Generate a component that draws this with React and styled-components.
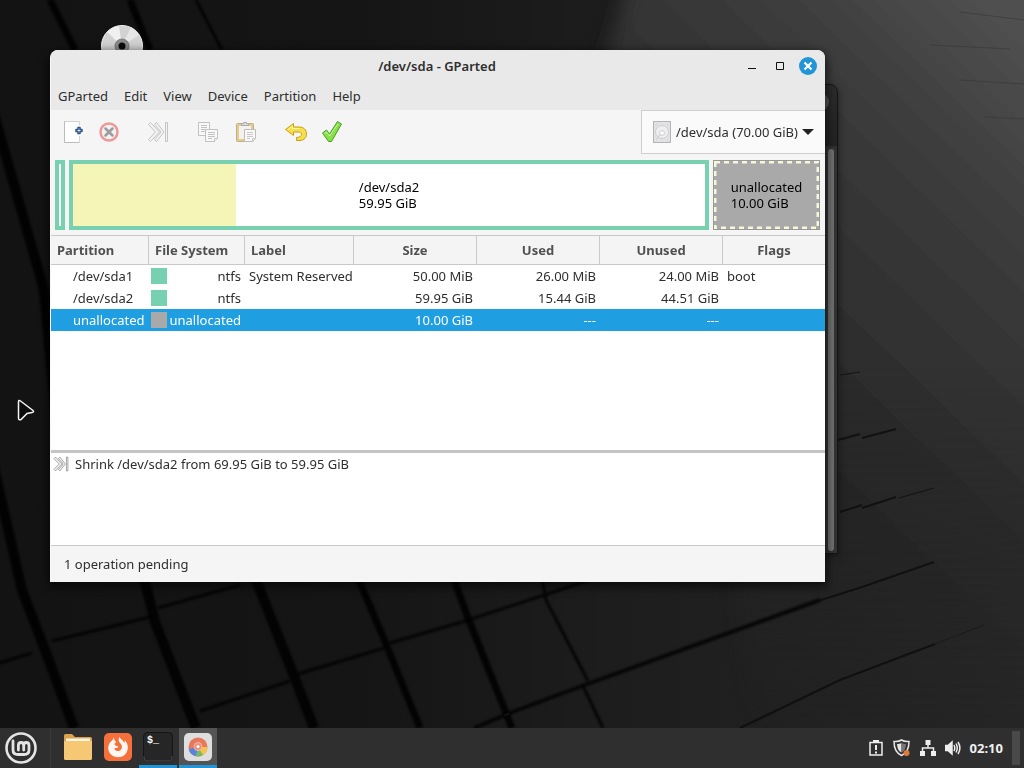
import React from 'react';
import styled, { createGlobalStyle } from 'styled-components';

const GlobalStyle = createGlobalStyle`
  * {
    box-sizing: border-box;
  }

  body {
    margin: 0;
    font-family: "Noto Sans", "Open Sans", sans-serif;
    font-size: 13px;
    line-height: 16px;
    color: #2e2e2e;
  }

  button, select {
    font: inherit;
    color: inherit;
    border: none;
    background: none;
    padding: 0;
  }

  svg {
    display: block;
    flex: none;
  }
`;

const Screen = styled.div`
  display: flex;
  flex-direction: column;
  height: 100vh;
  background: #151515;
`;

const Desktop = styled.main`
  position: relative;
  flex: 1;
  overflow: hidden;
`;

const WallpaperSvg = styled.svg`
  position: absolute;
  inset: 0;
  width: 100%;
  height: 100%;
`;

const DiscIcon = styled.svg`
  position: absolute;
  top: 25px;
  left: 101px;
`;

const Cursor = styled.svg`
  position: absolute;
  top: 398px;
  left: 16px;
`;

/* the terminal that sits behind the main window */
const BackWindow = styled.div`
  position: absolute;
  top: 84px;
  right: 186px;
  bottom: 174px;
  width: 200px;
  display: flex;
  flex-direction: column;
  align-items: flex-end;
  padding: 64px 3px 2px 0;
  border: 1px solid #151515;
  border-radius: 8px 8px 0 0;
  background: linear-gradient(#2b2b2b, #222 60px, #333 62px);
  box-shadow: 0 2px 8px rgba(0, 0, 0, 0.5);
`;

const BackScrollbar = styled.div`
  flex: 1;
  width: 6px;
  border-radius: 3px;
  background: #707070;
`;

const BackClose = styled.div`
  position: absolute;
  top: 8px;
  right: 8px;
  width: 18px;
  height: 18px;
  border-radius: 50%;
  background: #555;
`;

const Window = styled.section`
  position: absolute;
  top: 50px;
  left: 50px;
  right: 199px;
  bottom: 146px;
  display: flex;
  flex-direction: column;
  overflow: hidden;
  border-left: 1px solid #f8f8f8;
  border-radius: 8px 8px 0 0;
  background: #f5f5f5;
  box-shadow: 0 3px 10px 2px rgba(0, 0, 0, 0.6);
`;

const TitleBar = styled.header`
  display: flex;
  align-items: center;
  height: 32px;
  padding: 0 8px 0 80px;
  background: #e9e9e9;
`;

const Title = styled.h1`
  flex: 1;
  margin: 0;
  font-size: 13px;
  font-weight: 600;
  text-align: center;
`;

const WindowButtons = styled.div`
  display: flex;
  gap: 10px;
`;

const WindowButton = styled.button`
  display: flex;
  align-items: center;
  justify-content: center;
  width: 18px;
  height: 18px;
  border-radius: 50%;
  background: ${({ $accent }) => ($accent ? '#2295d8' : 'transparent')};
`;

const MenuBar = styled.nav`
  display: flex;
  align-items: center;
  gap: 16px;
  height: 28px;
  padding: 0 7px;
  background: #e9e9e9;
`;

const Toolbar = styled.div`
  display: flex;
  align-items: center;
  height: 44px;
  padding-left: 10px;
`;

const ToolGroup = styled.div`
  display: flex;
  gap: ${({ $gap }) => $gap || 12}px;
  margin-right: ${({ $after }) => $after || 0}px;
`;

const ToolButton = styled.button`
  display: flex;
  align-items: center;
  justify-content: center;
  width: 24px;
  height: 24px;
`;

const DevicePicker = styled.label`
  display: flex;
  align-items: center;
  gap: 4px;
  height: 44px;
  margin-left: auto;
  padding: 0 11px 0 10px;
  border: 1px solid #cfcfcf;
  border-right: none;
  background: #fafafa;
`;

const DeviceSelect = styled.select`
  appearance: none;
  outline: none;
`;

const DiskMap = styled.div`
  display: grid;
  grid-template-columns: 10fr 640fr 107fr;
  gap: 4px;
  height: 81px;
  padding: 6px 5px 5px 4px;
`;

const Partition = styled.div`
  position: relative;
  display: flex;
  align-items: center;
  justify-content: center;
  min-width: 0;
  border: ${({ $empty }) => ($empty ? '1px solid #999' : '4px solid #77d0b0')};
  background: ${({ $empty }) => ($empty ? '#a9a9a9' : '#fff')};
  color: #000;
`;

const DashedEdge = styled.svg`
  position: absolute;
  inset: 0;
  width: 100%;
  height: 100%;
`;

const UsedSpace = styled.div`
  position: absolute;
  top: 0;
  bottom: 0;
  left: 0;
  background: #f6f5b8;
`;

const PartitionText = styled.div`
  position: relative;
  white-space: pre-line;
`;

const ListPane = styled.div`
  flex: 1;
  overflow: hidden;
  background: #fff;
`;

const Table = styled.table`
  width: 100%;
  table-layout: fixed;
  border-collapse: separate;
  border-spacing: 0;
`;

const HeadCell = styled.th`
  height: 30px;
  padding: 0 6px;
  border: solid #c9c9c9;
  border-width: 1px 1px 1px 0;
  background: #f4f4f4;
  color: #505050;
  font-weight: 700;
  text-align: ${({ $align }) => $align || 'center'};
  white-space: nowrap;

  &:last-child {
    border-right: none;
  }
`;

const Row = styled.tr`
  background: ${({ $selected }) => ($selected ? '#1f9ee2' : 'transparent')};
  color: ${({ $selected }) => ($selected ? '#fff' : 'inherit')};
`;

const Cell = styled.td`
  height: 22px;
  padding: 0 4px 0 ${({ $indent }) => $indent || 4}px;
  text-align: ${({ $align }) => $align || 'left'};
  white-space: nowrap;
`;

const FileSystem = styled.div`
  display: flex;
  align-items: center;
  justify-content: space-between;
`;

const Swatch = styled.span`
  width: 16px;
  height: 16px;
  background: ${({ $color }) => $color};
`;

const OperationsPane = styled.ul`
  height: 96px;
  margin: 0;
  padding: 1px 2px;
  border-top: 3px solid #c4c4c4;
  border-bottom: 1px solid #c9c9c9;
  background: #fff;
  list-style: none;
`;

const Operation = styled.li`
  display: flex;
  align-items: center;
  gap: 6px;
  height: 20px;
`;

const StatusBar = styled.footer`
  display: flex;
  align-items: center;
  height: 36px;
  padding: 0 13px;
`;

const Panel = styled.footer`
  display: flex;
  align-items: center;
  height: 40px;
  background: #2f2f2f;
  color: #f0f0f0;
`;

const MenuButton = styled.button`
  display: flex;
  align-items: center;
  height: 40px;
  padding: 0 12px 0 4px;
  border-right: 1px solid #3a3a3a;
`;

const Launchers = styled.div`
  display: flex;
  gap: 2px;
  padding-left: 8px;
`;

const Launcher = styled.button`
  display: flex;
  align-items: center;
  justify-content: center;
  width: 38px;
  height: 40px;
  border-bottom: 3px solid ${({ $running }) => ($running ? '#2295d8' : 'transparent')};
  background: ${({ $active }) => ($active ? '#545454' : 'transparent')};
  background-clip: padding-box;
`;

const Tray = styled.div`
  display: flex;
  align-items: center;
  gap: 9px;
  margin-left: auto;
  padding-right: 9px;
`;

const TrayButton = styled.button`
  display: flex;
`;

const Clock = styled.time`
  font-weight: 700;
`;

const ShowDesktop = styled.button`
  width: 8px;
  height: 34px;
  margin-right: 4px;
  background: #494949;
`;

const menus = ['GParted', 'Edit', 'View', 'Device', 'Partition', 'Help'];

const columns = [
  { label: 'Partition', width: 98, align: 'left' },
  { label: 'File System', width: 96, align: 'left' },
  { label: 'Label', width: 109, align: 'left' },
  { label: 'Size', width: 123 },
  { label: 'Used', width: 123 },
  { label: 'Unused', width: 123 },
  { label: 'Flags' },
];

const rows = [
  { name: '/dev/sda1', fs: 'ntfs', color: '#77d0b0', label: 'System Reserved', size: '50.00 MiB', used: '26.00 MiB', unused: '24.00 MiB', flags: 'boot' },
  { name: '/dev/sda2', fs: 'ntfs', color: '#77d0b0', label: '', size: '59.95 GiB', used: '15.44 GiB', unused: '44.51 GiB', flags: '' },
  { name: 'unallocated', fs: 'unallocated', color: '#a9a9a9', label: '', size: '10.00 GiB', used: '---', unused: '---', flags: '', selected: true },
];

const Wallpaper = () => (
  <WallpaperSvg viewBox="0 0 1024 728" preserveAspectRatio="xMidYMid slice" aria-hidden="true">
    <defs>
      <linearGradient id="base" x1="0" y1="0" x2="1" y2="0">
        <stop offset="0" stopColor="#131313" />
        <stop offset="0.35" stopColor="#151515" />
        <stop offset="0.6" stopColor="#1d1d1d" />
        <stop offset="1" stopColor="#262626" />
      </linearGradient>
      <linearGradient id="slab" x1="0.2" y1="1" x2="0.75" y2="0">
        <stop offset="0" stopColor="#232323" />
        <stop offset="0.45" stopColor="#292929" />
        <stop offset="0.8" stopColor="#3c3c3c" />
        <stop offset="1" stopColor="#505050" />
      </linearGradient>
      <linearGradient id="fade" x1="0" y1="0" x2="0" y2="1">
        <stop offset="0" stopColor="#fff" />
        <stop offset="0.5" stopColor="#fff" />
        <stop offset="1" stopColor="#000" />
      </linearGradient>
      <mask id="slabMask">
        <rect width="1024" height="728" fill="url(#fade)" />
      </mask>
      <filter id="soft">
        <feGaussianBlur stdDeviation="1" />
      </filter>
      <filter id="edge">
        <feGaussianBlur stdDeviation="9" />
      </filter>
    </defs>
    <rect width="1024" height="728" fill="url(#base)" />
    <path d="M635 -40L1060 -40V760H760L700 300L605 60Z" fill="url(#slab)" filter="url(#edge)" mask="url(#slabMask)" />
    <g stroke="#070707" fill="none" filter="url(#soft)">
      <g strokeWidth="10" opacity="0.85">
        <path d="M-10 100L44 290L60 460" />
        <path d="M-10 450L22 590L45 650L74 728" />
        <path d="M142 570L155 622L196 728" />
        <path d="M252 570L294 676L314 728" />
      </g>
      <g strokeWidth="7" opacity="0.85">
        <path d="M50 0L75 50" />
        <path d="M130 0L150 50" />
        <path d="M358 578L386 644L420 728" />
        <path d="M452 574L468 618L512 728" />
      </g>
      <g strokeWidth="3" opacity="0.8">
        <path d="M196 0L222 50" />
        <path d="M542 578L546 600L588 681M583 686L603 728" />
        <path d="M-4 664L32 653" />
        <path d="M52 641L150 617M158 608L240 585" />
        <path d="M200 711L290 681M298 674L384 648" />
        <path d="M390 643L462 622L590 580" />
      </g>
      <path d="M474 728L515 711L590 683L820 600" strokeWidth="4" opacity="0.8" />
    </g>
    <g stroke="#0b0b0b" fill="none" opacity="0.75">
      <path d="M815 602L862 587L934 562" strokeWidth="2" />
      <path d="M740 728L840 680L935 644" strokeWidth="2" />
      <path d="M935 644L984 625" opacity="0.5" />
      <path d="M840 512L862 505M862 508L896 497" strokeWidth="2" />
      <path d="M899 498L934 488" />
      <path d="M838 440L860 434M862 438L896 429" strokeWidth="2" />
      <path d="M840 375L860 372" />
    </g>
    <g stroke="#2e2e2e" fill="none" opacity="0.4">
      <path d="M960 12L1024 20M930 45L1010 49M960 80L1024 84M985 117L1024 119" />
    </g>
  </WallpaperSvg>
);

const ResizeIcon = ({ width = 22, height = 22, color = '#c4c4c4' }) => (
  <svg width={width} height={height} viewBox="0 0 22 22" fill="#f3f3f3" stroke={color} strokeLinejoin="round">
    <path d="M1.500 3.500L3.500 1.500L12.500 11L3.500 20.500L1.500 18.500L8.500 11Z" />
    <path d="M7.500 3.500L9.500 1.500L17 11L9.500 20.500L7.500 18.500L14 11Z" />
    <path d="M18.500 1.500H20.500V20.500H18.500Z" />
  </svg>
);

const NewIcon = () => (
  <svg width="22" height="24" viewBox="0 0 22 24" fill="none">
    <path d="M2.500 1.500H17.500V22.500H2.500Z" fill="#fff" stroke="#d4d4d4" />
    <path d="M2.500 1.500V22.500H17.500" stroke="#a5a5a5" strokeDasharray="1 1" />
    <circle cx="17" cy="10.500" r="5.500" fill="#fafafa" />
    <path d="M16 7.500H18V9.500H20V11.500H18V13.500H16V11.500H14V9.500H16Z" fill="#fff" stroke="#2c5490" strokeWidth="1.500" strokeLinejoin="round" />
  </svg>
);

const DeleteIcon = () => (
  <svg width="22" height="22" viewBox="0 0 22 22" fill="none">
    <circle cx="11" cy="11" r="8.500" fill="#f2f1f1" stroke="#ed9898" strokeWidth="2.500" />
    <path d="M7.500 7.500L14.500 14.500M14.500 7.500L7.500 14.500" stroke="#9c9c9c" strokeWidth="2.500" strokeLinecap="round" />
  </svg>
);

const CopyIcon = () => (
  <svg width="22" height="22" viewBox="0 0 22 22" fill="#f8f8f8" stroke="#c2c2c2">
    <path d="M1.500 1.500H12.500V14.500H1.500Z" />
    <path d="M4 4.500H10M4 6.500H10M4 8.500H10M4 10.500H8" />
    <path d="M8.500 8.500H20.500V17.500L17.500 20.500H8.500Z" />
    <path d="M11 11.500H18M11 13.500H18M11 15.500H18M11 17.500H15" />
    <path d="M17.500 20.500V17.500H20.500" />
  </svg>
);

const PasteIcon = () => (
  <svg width="22" height="22" viewBox="0 0 22 22" fill="none">
    <rect x="1.500" y="2.500" width="17" height="18" rx="1" fill="#e2cb9a" stroke="#c8ad75" />
    <path d="M4 5H16V18H4Z" fill="#f4f2ed" />
    <path d="M6.500 4.500V2.500H8.500V1.500H11.500V2.500H13.500V4.500Z" fill="#ddd" stroke="#aaa" />
    <path d="M9.500 8.500H20.500V17.500L17.500 20.500H9.500Z" fill="#f9f9f9" stroke="#bdbdbd" />
    <path d="M12 11.500H18M12 13.500H18M12 15.500H18M12 17.500H15M17.500 20.500V17.500H20.500" stroke="#c8c8c8" />
  </svg>
);

const UndoIcon = () => (
  <svg width="24" height="24" viewBox="0 0 24 24">
    <path
      d="M1.500 9.500L9.500 3.500V7H15C20 7 22.500 10 22.500 14C22.500 17.500 20.500 20 16 20.500H12.500V17.500C16 17.500 17.500 16 17.500 14.500C17.500 12.500 16 12 14 12H9.500V15.500Z"
      fill="#f7df4b"
      stroke="#c79f13"
      strokeLinejoin="round"
    />
    <path d="M4 9.500L8.500 6V8.500H15.500" fill="none" stroke="#fff6a8" />
  </svg>
);

const ApplyIcon = () => (
  <svg width="24" height="24" viewBox="0 0 24 24">
    <path
      d="M2.500 13L6.500 10L9.500 14L17.500 1.500L21.500 4L11.500 21.500H8.500Z"
      fill="#86e048"
      stroke="#4b9c27"
      strokeLinejoin="round"
    />
    <path d="M4.500 13.500L6.500 12L9.500 16L18 4" fill="none" stroke="#c3f59c" />
  </svg>
);

const DriveIcon = () => (
  <svg width="20" height="24" viewBox="0 0 20 24" fill="none" stroke="#cfcfd2">
    <rect x="1.500" y="1.500" width="17" height="21" fill="#e2e2e4" stroke="#b4b4b8" />
    <circle cx="10" cy="12" r="6.500" fill="#eeeef0" />
    <circle cx="10" cy="13" r="2.500" fill="#fafafa" />
    <path d="M4 20.500L8 14M3.500 4.500H5M15 4.500H16.500M15 20.500H16.500" />
  </svg>
);

const MintIcon = () => (
  <svg width="34" height="34" viewBox="0 0 34 34" fill="none" stroke="#e4e4e4">
    <circle cx="17" cy="17" r="14.500" strokeWidth="2.600" />
    <path
      d="M9 10V19C9 22 11 23.500 14 23.500H20C23 23.500 25 22 25 19V14.500C25 12.500 24 11.500 22.300 11.500S19.700 12.500 19.700 14.500V19M19.700 14.500C19.700 12.500 18.700 11.500 17 11.500S14.400 12.500 14.400 14.500V19"
      strokeWidth="2.800"
      strokeLinecap="round"
    />
  </svg>
);

const FolderIcon = () => (
  <svg width="28" height="26" viewBox="0 0 28 26">
    <path d="M0 1.500Q0 0 1.500 0H8L11 3H26.500Q28 3 28 4.500V10H0Z" fill="#dba14d" />
    <path d="M2 4.500H26V8H2Z" fill="#fdf5e4" />
    <path d="M0 7H28V24.500Q28 26 26.500 26H1.500Q0 26 0 24.500Z" fill="#f6c873" />
  </svg>
);

const FirefoxIcon = () => (
  <svg width="28" height="28" viewBox="0 0 28 28">
    <rect width="28" height="28" rx="5" fill="#f5703a" />
    <path
      d="M10 4C9.500 7 7.500 7.500 6 9.500C3.200 13.500 4 18.500 7 21.500C11 25.500 18 25 21.500 21C25 17 24.500 10.500 20.500 7C21 8.500 20.700 9.500 20.500 10C19 7 16.500 6.500 15.500 4C14 6.500 14.500 8.500 16.500 10.500C18.500 12.500 18.500 16 16 17.500C13.500 19 10.500 17.500 10.500 14.700C12 15.500 13.500 15 14.500 13.500C12.500 13.500 12 12.500 10.500 11.500C10.500 10 11.500 9.500 12.500 9C10.500 8 10 6.500 10 4Z"
      fill="#fff8f2"
    />
  </svg>
);

const TerminalIcon = () => (
  <svg width="30" height="30" viewBox="0 0 30 30">
    <rect x="0.500" y="0.500" width="29" height="29" rx="4" fill="#262626" stroke="#151515" />
    <path d="M1 24V26Q1 29 4 29H26Q29 29 29 26V24" fill="none" stroke="#4a4a4a" />
    <text x="4" y="11" fill="#fff" fontFamily="Liberation Mono, monospace" fontSize="10" fontWeight="700">$_</text>
  </svg>
);

const PartitionIcon = () => (
  <svg width="28" height="28" viewBox="0 0 28 28" fill="none">
    <rect width="28" height="28" rx="5" fill="#dedede" />
    <circle cx="14" cy="14" r="9.500" fill="#e8785a" />
    <path d="M14 14L4.700 16A9.500 9.500 0 0 0 12 23.300Z" fill="#5b83dd" />
    <path d="M14 14L12 23.300A9.500 9.500 0 0 0 19 22Z" fill="#6fbf6a" />
    <path d="M14 14L19 22A9.500 9.500 0 0 0 23.500 14Z" fill="#f0c64e" />
    <circle cx="14" cy="13.500" r="4" fill="#e88f77" stroke="#f6b9a8" />
    <circle cx="14" cy="13.500" r="1.500" fill="#fff" />
  </svg>
);

const ReportIcon = () => (
  <svg width="16" height="18" viewBox="0 0 16 18" fill="none" stroke="#eee" strokeWidth="1.500">
    <path d="M2 3.500H14V16H2Z" />
    <path d="M5 2.500H11" strokeWidth="3" />
    <path d="M8 6V11M8 12.500V14.500" strokeWidth="2" />
  </svg>
);

const ShieldIcon = () => (
  <svg width="18" height="18" viewBox="0 0 18 18">
    <path d="M8.500 1C6.500 2.300 3.500 2.800 1 2.500C1 9.500 3 14 8.500 16.500C14 14 16 9.500 16 2.500C13.500 2.800 10.500 2.300 8.500 1Z" fill="#333" stroke="#e6e6e6" strokeWidth="1.500" />
    <path d="M8.500 4C7.500 4.700 5.500 5 4 5C4.300 9.500 5.500 12 8.500 13.500Z" fill="#e6e6e6" />
    <path d="M8.500 4C9.500 4.700 11.500 5 13 5C12.700 9.500 11.500 12 8.500 13.500Z" fill="#777" />
    <circle cx="13.500" cy="14" r="3" fill="#de7c3c" />
  </svg>
);

const NetworkIcon = () => (
  <svg width="16" height="16" viewBox="0 0 16 16" fill="#eee">
    <path d="M5.500 0H10.500V5H5.500ZM0 11H5V16H0ZM11 11H16V16H11Z" />
    <path d="M8 5V8M2.500 11V8H13.500V11" fill="none" stroke="#eee" strokeWidth="1.500" />
  </svg>
);

const VolumeIcon = () => (
  <svg width="16" height="16" viewBox="0 0 16 16" fill="none" stroke="#eee" strokeWidth="1.500">
    <path d="M0.500 5.500H3L7 2V14L3 10.500H0.500Z" fill="#eee" />
    <path d="M9 5Q10.500 8 9 11M11 3.500Q13.500 8 11 12.500M13 2Q16.800 8 13 14" />
  </svg>
);

const App = () => (
  <Screen>
    <GlobalStyle />
    <Desktop>
      <Wallpaper />
      <DiscIcon width="42" height="42" viewBox="0 0 42 42">
        <circle cx="21" cy="21" r="20.500" fill="#d2d2d2" stroke="#eee" />
        <path d="M21 21L6 7A20.500 20.500 0 0 1 18 1Z" fill="#f0f0f0" />
        <path d="M21 21L30 2A20.500 20.500 0 0 1 38 10Z" fill="#e6e6e6" />
        <circle cx="21" cy="21" r="7" fill="#8b8b8b" stroke="#777" />
        <circle cx="21" cy="21" r="3.500" fill="#0b0b0b" />
      </DiscIcon>
      <BackWindow>
        <BackClose />
        <BackScrollbar />
      </BackWindow>
      <Window>
        <TitleBar>
          <Title>/dev/sda - GParted</Title>
          <WindowButtons>
            <WindowButton aria-label="Minimize">
              <svg width="10" height="10" viewBox="0 0 10 10"><path d="M1 7.500H9" stroke="#111" /></svg>
            </WindowButton>
            <WindowButton aria-label="Maximize">
              <svg width="10" height="10" viewBox="0 0 10 10"><path d="M1.500 1.500H8.500V8.500H1.500Z" fill="none" stroke="#111" /></svg>
            </WindowButton>
            <WindowButton aria-label="Close" $accent>
              <svg width="10" height="10" viewBox="0 0 10 10"><path d="M1.500 1.500L8.500 8.500M8.500 1.500L1.500 8.500" stroke="#fff" strokeWidth="2.200" /></svg>
            </WindowButton>
          </WindowButtons>
        </TitleBar>
        <MenuBar>
          {menus.map((menu) => (
            <button key={menu}>{menu}</button>
          ))}
        </MenuBar>
        <Toolbar>
          <ToolGroup $after={25}>
            <ToolButton aria-label="New"><NewIcon /></ToolButton>
            <ToolButton aria-label="Delete"><DeleteIcon /></ToolButton>
          </ToolGroup>
          <ToolGroup $after={26}>
            <ToolButton aria-label="Resize/Move"><ResizeIcon /></ToolButton>
          </ToolGroup>
          <ToolGroup $gap={14} $after={26}>
            <ToolButton aria-label="Copy"><CopyIcon /></ToolButton>
            <ToolButton aria-label="Paste"><PasteIcon /></ToolButton>
          </ToolGroup>
          <ToolGroup>
            <ToolButton aria-label="Undo"><UndoIcon /></ToolButton>
            <ToolButton aria-label="Apply"><ApplyIcon /></ToolButton>
          </ToolGroup>
          <DevicePicker>
            <DriveIcon />
            <DeviceSelect aria-label="Device">
              <option>/dev/sda (70.00 GiB)</option>
            </DeviceSelect>
            <svg width="12" height="8" viewBox="0 0 12 8"><path d="M0 1H12L6 7Z" fill="#222" /></svg>
          </DevicePicker>
        </Toolbar>
        <DiskMap>
          <Partition />
          <Partition>
            <UsedSpace style={{ width: `${(15.44 / 59.95) * 100}%` }} />
            <PartitionText>{'/dev/sda2\n59.95 GiB'}</PartitionText>
          </Partition>
          <Partition $empty>
            <DashedEdge aria-hidden="true">
              <rect x="1" y="1" width="103" height="66" fill="none" stroke="#f8f7d8" strokeWidth="3" strokeDasharray="5 4" />
            </DashedEdge>
            <PartitionText>{'unallocated\n10.00 GiB'}</PartitionText>
          </Partition>
        </DiskMap>
        <ListPane>
          <Table>
            <colgroup>
              {columns.map(({ label, width }) => (
                <col key={label} width={width} />
              ))}
            </colgroup>
            <thead>
              <tr>
                {columns.map(({ label, align }) => (
                  <HeadCell key={label} $align={align}>{label}</HeadCell>
                ))}
              </tr>
            </thead>
            <tbody>
              {rows.map((row) => (
                <Row key={row.name} $selected={row.selected}>
                  <Cell $indent={22}>{row.name}</Cell>
                  <Cell $indent={2}>
                    <FileSystem>
                      <Swatch $color={row.color} />
                      {row.fs}
                    </FileSystem>
                  </Cell>
                  <Cell>{row.label}</Cell>
                  <Cell $align="right">{row.size}</Cell>
                  <Cell $align="right">{row.used}</Cell>
                  <Cell $align="right">{row.unused}</Cell>
                  <Cell>{row.flags}</Cell>
                </Row>
              ))}
            </tbody>
          </Table>
        </ListPane>
        <OperationsPane>
          <Operation>
            <ResizeIcon width={16} height={16} color="#8a8a8a" />
            Shrink /dev/sda2 from 69.95 GiB to 59.95 GiB
          </Operation>
        </OperationsPane>
        <StatusBar>1 operation pending</StatusBar>
      </Window>
      <Cursor width="20" height="24" viewBox="0 0 20 24">
        <path d="M2.500 4Q2.500 1.500 4.500 3L17 12.500Q18.500 14 16 14.500L11 15.500L5 21.500Q2.500 22.500 2.500 20Z" fill="#0c0c0c" stroke="#f4f4f4" strokeWidth="1.500" />
      </Cursor>
    </Desktop>
    <Panel>
      <MenuButton aria-label="Menu"><MintIcon /></MenuButton>
      <Launchers>
        <Launcher aria-label="Files"><FolderIcon /></Launcher>
        <Launcher aria-label="Firefox"><FirefoxIcon /></Launcher>
        <Launcher aria-label="Terminal" $running><TerminalIcon /></Launcher>
        <Launcher aria-label="GParted" $running $active><PartitionIcon /></Launcher>
      </Launchers>
      <Tray>
        <TrayButton aria-label="System reports"><ReportIcon /></TrayButton>
        <TrayButton aria-label="Updates"><ShieldIcon /></TrayButton>
        <TrayButton aria-label="Network"><NetworkIcon /></TrayButton>
        <TrayButton aria-label="Volume"><VolumeIcon /></TrayButton>
        <Clock>02:10</Clock>
      </Tray>
      <ShowDesktop aria-label="Show desktop" />
    </Panel>
  </Screen>
);

export default App;
